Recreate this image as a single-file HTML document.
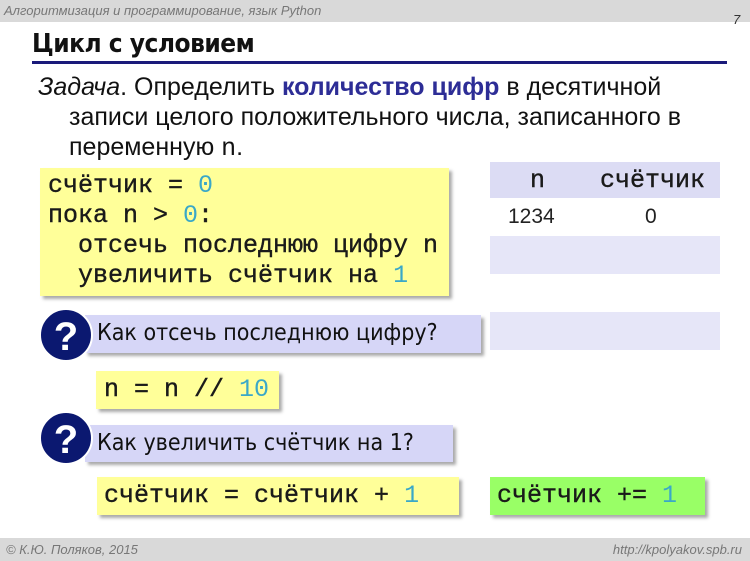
<!DOCTYPE html>
<html><head><meta charset="utf-8"><style>
*{margin:0;padding:0;box-sizing:border-box}
body{width:750px;height:561px;position:relative;background:#fff;font-family:"Liberation Sans",sans-serif;overflow:hidden}
.a{position:absolute}
.mono{font-family:"Liberation Mono",monospace;color:#1a1a1a;font-size:25px;-webkit-text-stroke:0.4px #1a1a1a}
.num{color:#3aa8c8;-webkit-text-stroke:0}
.y{background:#ffff99;box-shadow:3px 3px 3px #aaa}
.q{background:#d6d6f7;box-shadow:3px 3px 3px #aaa;font-family:"DejaVu Sans Condensed","Liberation Sans",sans-serif;font-size:23px;color:#111;line-height:37px}
.c{background:#0b1870;border-radius:50%;width:54px;height:54px;color:#fff;font-weight:bold;font-size:40px;text-align:center;line-height:54px;border:2px solid #fff}
</style></head><body>
<div class="a" style="left:0;top:0;width:750px;height:22px;background:#d9d9d9"></div>
<div class="a" style="left:4px;top:3px;font-size:13px;font-style:italic;color:#777">Алгоритмизация и программирование, язык Python</div>
<div class="a" style="left:733px;top:12px;font-size:13px;font-style:italic;color:#333">7</div>
<div class="a" style="left:32px;top:29px;font-size:26px;font-weight:bold;color:#111;font-family:'DejaVu Sans Condensed','Liberation Sans',sans-serif;letter-spacing:-0.5px">Цикл с условием</div>
<div class="a" style="left:32px;top:61px;width:695px;height:3px;background:#1a1a7a"></div>
<div class="a" style="left:38px;top:72px;font-size:25px;color:#111;line-height:30px;width:712px">
<i>Задача</i>. Определить <b style="color:#2d2d96">количество цифр</b> в десятичной<br>
<span style="padding-left:31px">записи целого положительного числа, записанного в</span><br>
<span style="padding-left:31px">переменную <span style="font-family:'Liberation Mono',monospace">n</span>.</span></div>
<div class="a y mono" style="left:40px;top:168px;width:409px;height:128px;line-height:30px;padding:3px 8px">счётчик = <span class="num">0</span><br>пока n &gt; <span class="num">0</span>:<br>&nbsp;&nbsp;отсечь последнюю цифру n<br>&nbsp;&nbsp;увеличить счётчик на <span class="num">1</span></div>
<div class="a" style="left:490px;top:162px;width:230px;height:36px;background:#dcdcf4"></div>
<div class="a" style="left:490px;top:236px;width:230px;height:38px;background:#e6e6f8"></div>
<div class="a" style="left:490px;top:312px;width:230px;height:38px;background:#e6e6f8"></div>
<div class="a mono" style="left:530px;top:166px">n</div>
<div class="a mono" style="left:600px;top:166px">счётчик</div>
<div class="a" style="left:508px;top:205px;font-size:21px;color:#222">1234</div>
<div class="a" style="left:645px;top:205px;font-size:21px;color:#222">0</div>
<div class="a q" style="left:85px;top:315px;width:396px;height:38px;padding-left:12px">Как отсечь последнюю цифру?</div>
<div class="a c" style="left:39px;top:308px">?</div>
<div class="a y mono" style="left:96px;top:371px;width:183px;height:38px;line-height:38px;padding-left:8px">n = n // <span class="num">10</span></div>
<div class="a q" style="left:85px;top:425px;width:368px;height:37px;padding-left:12px">Как увеличить счётчик на 1?</div>
<div class="a c" style="left:39px;top:411px">?</div>
<div class="a y mono" style="left:97px;top:477px;width:362px;height:38px;line-height:38px;padding-left:7px">счётчик = счётчик + <span class="num">1</span></div>
<div class="a mono" style="left:490px;top:477px;width:215px;height:38px;line-height:38px;padding-left:7px;background:#99ff66;box-shadow:3px 3px 3px #aaa">счётчик += <span class="num">1</span></div>
<div class="a" style="left:0;top:538px;width:750px;height:23px;background:#d9d9d9"></div>
<div class="a" style="left:6px;top:542px;font-size:13px;font-style:italic;color:#777">© К.Ю. Поляков, 2015</div>
<div class="a" style="right:8px;top:542px;font-size:13px;font-style:italic;color:#777">http://kpolyakov.spb.ru</div>
</body></html>
